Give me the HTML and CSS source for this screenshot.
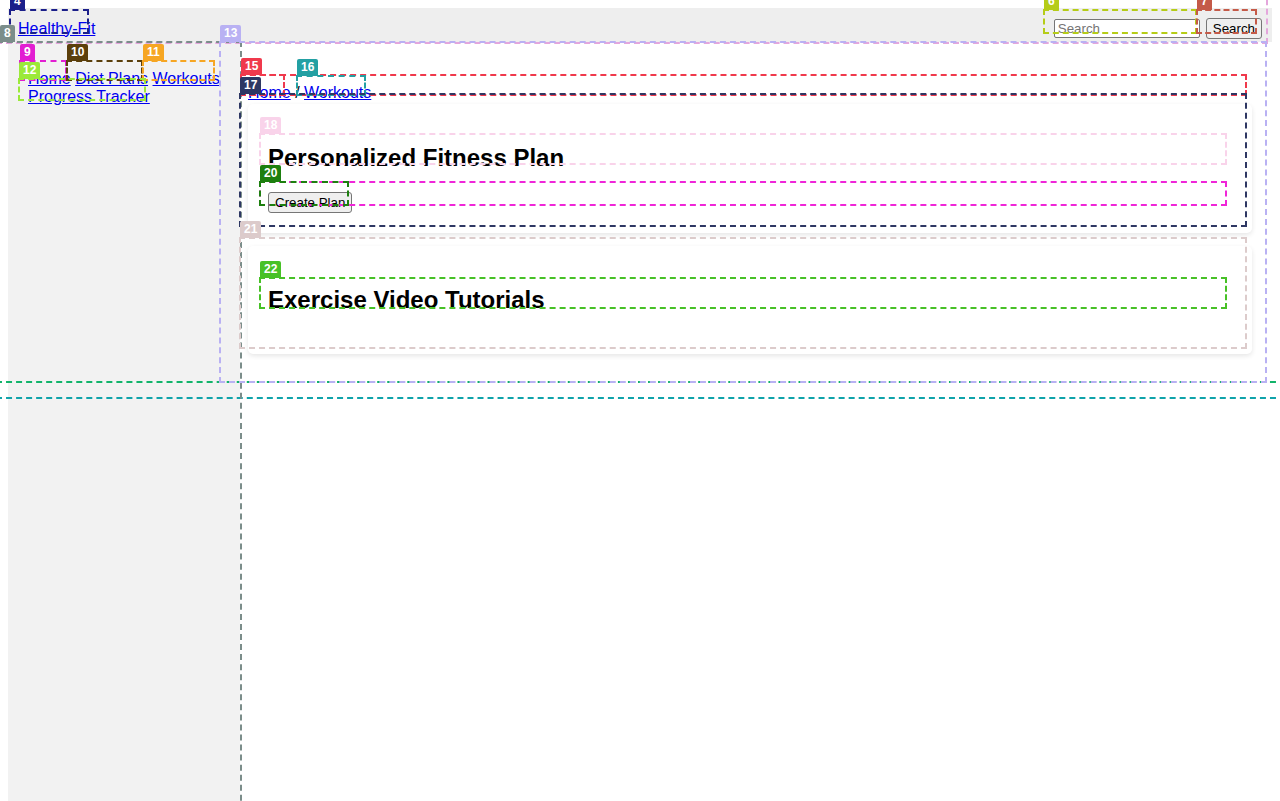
FILE: index.html
```html
<!DOCTYPE html>
<html lang="en">
<head>
<meta charset="utf-8">
<title>Healthy-Fit</title>
<link rel="stylesheet" href="styles.css">
</head>
<body>
<header class="header">
  <a class="logo" href="#">Healthy-Fit</a>
  <form class="search">
    <input class="search-input" type="text" placeholder="Search">
    <button class="search-btn" type="button">Search</button>
  </form>
</header>
<div class="layout">
  <aside class="sidebar">
    <nav class="side-nav"><a href="#">Home</a> <a href="#">Diet Plans</a> <a href="#">Workouts</a> <a href="#">Progress Tracker</a></nav>
  </aside>
  <main class="main">
    <nav class="breadcrumb"><a href="#">Home</a> / <a href="#">Workouts</a></nav>
    <section class="card">
      <h2>Personalized Fitness Plan</h2>
      <button class="btn" type="button">Create Plan</button>
    </section>
    <section class="card">
      <h2>Exercise Video Tutorials</h2>
    </section>
  </main>
</div>

<div class="overlay">
  <div class="ann a-teal"></div>
  <div class="ann a-green"></div>
  <div class="ann a5"></div>
  <div class="ann a4"><span class="lbl">4</span></div>
  <div class="ann a6"><span class="lbl">6</span></div>
  <div class="ann a7"><span class="lbl">7</span></div>
  <div class="ann a8"><span class="lbl">8</span></div>
  <div class="ann a9"><span class="lbl">9</span></div>
  <div class="ann a10"><span class="lbl">10</span></div>
  <div class="ann a11"><span class="lbl">11</span></div>
  <div class="ann a12"><span class="lbl">12</span></div>
  <div class="ann a13"><span class="lbl">13</span></div>
  <div class="ann a14"></div>
  <div class="ann a15"><span class="lbl">15</span></div>
  <div class="ann a16"><span class="lbl">16</span></div>
  <div class="ann a17"><span class="lbl">17</span></div>
  <div class="ann a18"><span class="lbl">18</span></div>
  <div class="ann a19"></div>
  <div class="ann a20"><span class="lbl">20</span></div>
  <div class="ann a21"><span class="lbl">21</span></div>
  <div class="ann a22"><span class="lbl">22</span></div>
</div>
</body>
</html>
```

FILE: styles.css
```css
html {
  overflow: hidden;
}

body {
  margin: 8px 8px 0;
  font-family: "Liberation Sans", Arial, sans-serif;
  font-size: 16px;
  color: #000;
  background: #fff;
}

a {
  color: #0000ee;
}

.header {
  display: flex;
  justify-content: space-between;
  align-items: center;
  background: #eeeeee;
  padding: 10px 10px 3px;
}

.search {
  display: flex;
  align-items: center;
  gap: 6px;
  margin: 0;
}

.search-input {
  width: 146px;
  font: 13.33px "Liberation Sans", Arial, sans-serif;
  padding: 1px 3px;
  border: 1px solid #767676;
  border-radius: 2px;
  height: 19px;
  box-sizing: border-box;
}

.search-btn,
.btn {
  font: 13.33px "Liberation Sans", Arial, sans-serif;
  color: #000;
  background: #efefef;
  border: 1px solid #767676;
  border-radius: 3px;
  padding: 1px 6px;
  height: 21px;
}

.layout {
  display: flex;
  min-height: calc(100vh - 42px);
}

.sidebar {
  flex: none;
  width: 192px;
  padding: 28px 20px 20px;
  background: #f2f2f2;
}

.main {
  flex: 1;
  padding: 42px 20px 20px 8px;
}

.breadcrumb {
  margin-bottom: 2px;
}

.card {
  background: #fff;
  border-radius: 5px;
  box-shadow: 0 2px 5px rgba(0, 0, 0, 0.1);
  padding: 20px;
  margin-bottom: 13px;
}

.card h2 {
  font-size: 24px;
  margin: 19.92px 0;
}

/* annotation overlay */
.overlay {
  position: absolute;
  top: 0;
  left: 0;
  width: 1280px;
  height: 801px;
  overflow: hidden;
  pointer-events: none;
}

.ann {
  position: absolute;
  box-sizing: border-box;
  border: 2px dashed var(--c);
}

.lbl {
  position: absolute;
  left: -1px;
  bottom: calc(100% + 1px);
  background: var(--c);
  color: #fff;
  font: bold 12px/17px "Liberation Sans", Arial, sans-serif;
  padding: 0 4px;
  border-radius: 2px 2px 0 0;
  white-space: nowrap;
}

.a8 .lbl {
  left: 1px;
}

.a4  { --c: #1b1f8a; left: 9px;    top: 9px;   width: 80px;   height: 25px; }
.a5  { --c: #e4a6dc; left: -4px;   top: -30px; width: 1272px; height: 74px; }
.a6  { --c: #b5cc18; left: 1043px; top: 9px;   width: 154px;  height: 25px; }
.a7  { --c: #c45a48; left: 1196px; top: 9px;   width: 61px;   height: 25px; }
.a8  { --c: #7b8d8a; left: -3px;   top: 41px;  width: 245px;  height: 800px; }
.a9  { --c: #e21ed2; left: 19px;   top: 60px;  width: 48px;   height: 21px; }
.a10 { --c: #5b3f0b; left: 66px;   top: 60px;  width: 77px;   height: 21px; }
.a11 { --c: #f6a623; left: 142px;  top: 60px;  width: 73px;   height: 21px; }
.a12 { --c: #9be93a; left: 18px;   top: 78px;  width: 128px;  height: 23px; }
.a13 { --c: #b9b1f3; left: 219px;  top: 41px;  width: 1048px; height: 342px; }
.a14 { --c: #ee3b4f; left: 240px;  top: 74px;  width: 45px;   height: 22px; }
.a15 { --c: #f0394c; left: 240px;  top: 74px;  width: 1007px; height: 22px; }
.a16 { --c: #23a0a3; left: 296px;  top: 75px;  width: 70px;   height: 21px; }
.a17 { --c: #2e3763; left: 239px;  top: 93px;  width: 1008px; height: 134px; }
.a18 { --c: #f9d3ea; left: 259px;  top: 133px; width: 968px;  height: 32px; }
.a19 { --c: #f025d8; left: 259px;  top: 181px; width: 968px;  height: 25px; }
.a20 { --c: #1d7f0f; left: 259px;  top: 181px; width: 90px;   height: 25px; }
.a21 { --c: #dccbcb; left: 239px;  top: 237px; width: 1008px; height: 112px; }
.a22 { --c: #47c126; left: 259px;  top: 277px; width: 968px;  height: 32px; }
.a-green { --c: #12b36a; left: -4px; top: -10px; width: 1290px; height: 393px; }
.a-teal  { --c: #0fa3aa; left: -4px; top: -10px; width: 1290px; height: 409px; }
```
